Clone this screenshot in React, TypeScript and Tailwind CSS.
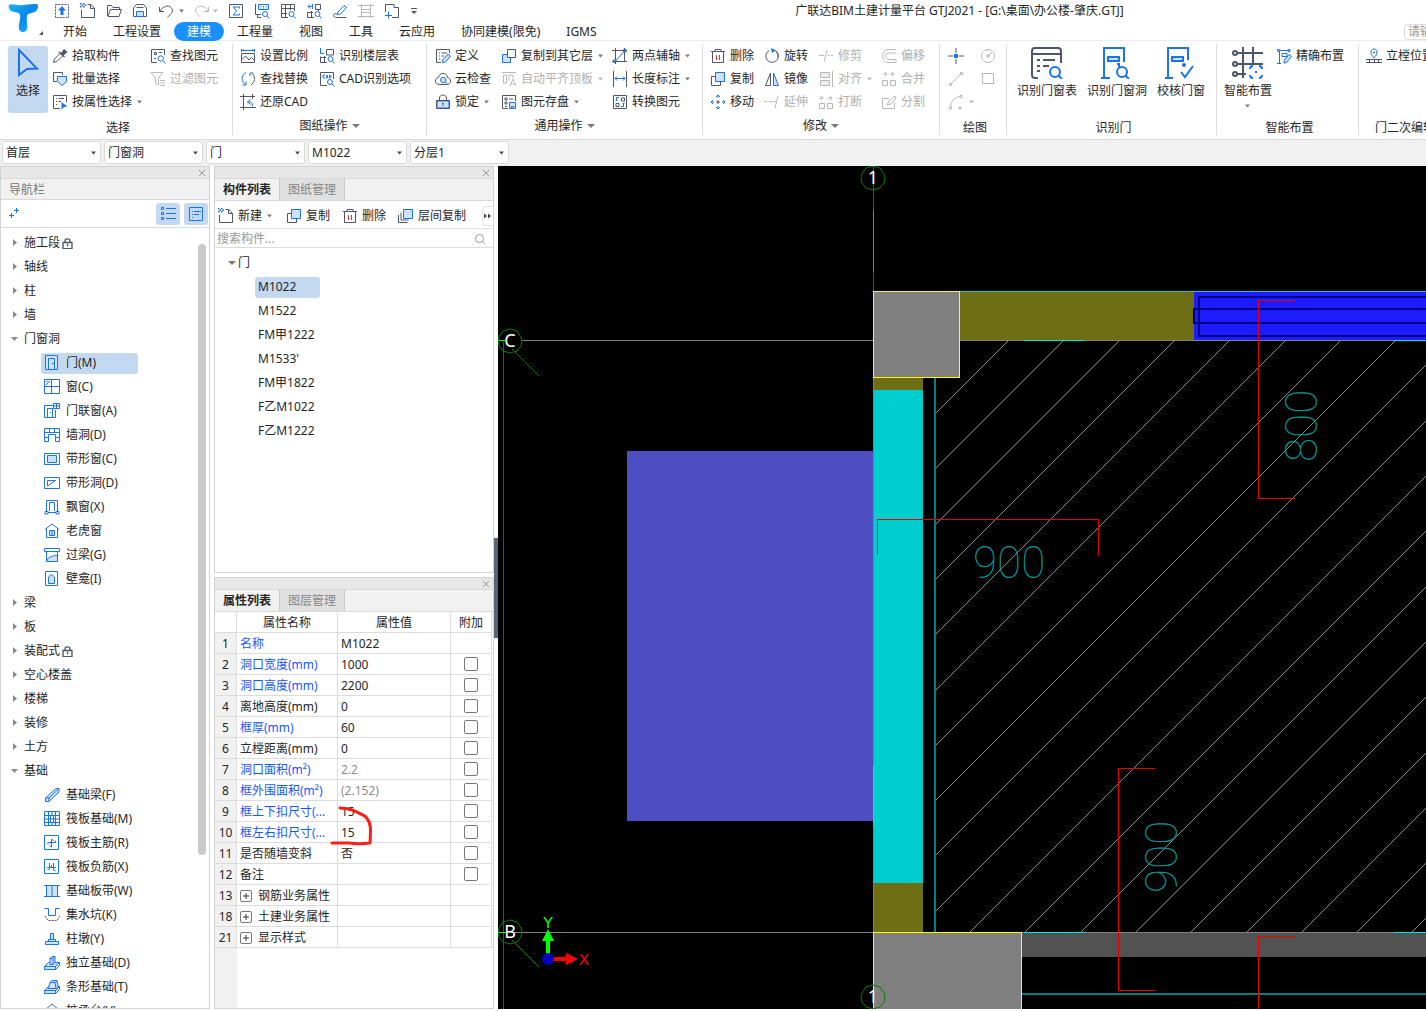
import { Fragment, useState } from 'react';
import clsx from 'clsx';

type Shape = [string, string];

const STYLES: Record<string, string> = {
    k: 'fill-none stroke-[#4f566b]',
    kd: 'fill-none stroke-[#4f566b] [stroke-dasharray:2_1]',
    K: 'fill-[#4f566b] stroke-none',
    b: 'fill-none stroke-[#1a73e8]',
    B: 'fill-[#1a73e8] stroke-none',
    f: 'fill-[#cfe2fc] stroke-[#1a73e8]',
    w: 'fill-white stroke-[#4f566b]',
    g: 'fill-none stroke-[#b8b8b8]',
    gf: 'fill-[#ececec] stroke-[#b8b8b8]',
    r: 'fill-none stroke-[#d92b2b]',
};

const ICONS: Record<string, Shape[]> = {
    // quick access bar
    upload: [['kd', 'M1.5 1.5h13v13h-13z'], ['B', 'M8 3l4 4.5H9.5V12h-3V7.5H4z']],
    newDoc: [['k', 'M7.5 1.5H11l3.500 4v9h-13V7M10.500 1.500v4h4'], ['B', 'M0 0h1.5v1.5H0zM3 0h1.5v1.5H3zM1.5 1.5H3V3H1.5zM4.5 1.5H6V3H4.5zM0 3h1.5v1.5H0zM3 3h1.5v1.5H3z']],
    open: [['k', 'M1.5 13V2.5h4l1.5 2h6.5v2M2 13.5L4.5 6.5h11l-2.500 7z']],
    save: [['k', 'M1.5 13.5V5l3-3.5h7l3 3.500v8.500zM4.500 4.5h7'], ['f', 'M4.500 13.500v-5h7v5z']],
    undo: [['k', 'M1.500 4v4.500H6M2 8c3-4.500 8-6.500 11-3.500s1 6.500-3.500 9.500']],
    redo: [['g', 'M14.500 4v4.500H10M14 8C11 3.500 6 1.500 3 4.500s-1 6.500 3.500 9.500']],
    sigma: [['k', 'M1.5 1.5h13v13h-13z'], ['b', 'M11.500 5.500v-1.500H5L8.500 8 5 12h6.500v-1.500']],
    sheetFind: [['k', 'M1.500 1v10.500H7M3.500 11.500v3H7'], ['b', 'M4.500 1.500h10v5h-10zM6.500 3.500h1M9 3.500h1M11.500 3.500h1M6.500 5h1M9 5h1M11.500 5h1M13.500 11a2.500 2.500 0 1 1-5 0a2.500 2.500 0 1 1 5 0M13 13l2.500 2.500']],
    gridFind: [['k', 'M1.500 1.500h13V8M1.500 1.500v13H8M1.500 5.500h13M1.500 10.500H7M5.500 1.500v13M10.500 1.500V7'], ['b', 'M14 11a2.500 2.500 0 1 1-5 0a2.500 2.500 0 1 1 5 0M13.500 13l2 2.500']],
    planFind: [['k', 'M9.500 1.500h5v5h-5zM1.500 9.500v5H8M1 9.500h6M5.500 8v6M12.500 6v2'], ['b', 'M2 3.500h5M4 1.500l-2 2 2 2M6.500 1v5M14 11a2.500 2.500 0 1 1-5 0a2.500 2.500 0 1 1 5 0M13.500 13l2 2.500']],
    brush: [['b', 'M6 9l6-6.500 2.500 2L8.500 11l-3.500 1z'], ['k', 'M4.500 10.500c-4 0-4 4 0 4h10']],
    ladder: [['g', 'M3.500 1v14M12.500 1v14M0 2.500h16M3 6.500h10M3 9.500h10M0 13.500h16']],
    crop: [['k', 'M1.500 9V1.500h8.500v3M10 4.500h4.500v10H8'], ['b', 'M4.500 8.500v7M1 12.500h7']],
    // ribbon
    picker: [['K', 'M9 5l3-4 3.500 3-4 3.500zM7.500 3.500l5.500 5-1 1-5.500-5z'], ['k', 'M8 5.500L2.500 11l-1 3.500 3.500-1L10.500 8']],
    batch: [['k', 'M5 10.500H1.500v-9h9V4'], ['f', 'M5.500 5.500h9v5l-4.500 4-4.500-4z']],
    attrSel: [['k', 'M8 14.500H1.500v-13h13V8M4 4.500h1M6.500 4.500H12M4 7.500h1M6.500 7.500H9M4 10.500h1'], ['B', 'M9.500 8l6 4.500-3.500.5-2.500 2.500z']],
    findEl: [['k', 'M7 14.500H1.500v-13h13V7M4.500 4.500h2v2h-2zM4 10.500h2M9 4.500h3'], ['b', 'M13.500 10.500a2.700 2.700 0 1 1-5.400 0a2.700 2.700 0 1 1 5.400 0M13 12.500l2.500 3']],
    filter: [['g', 'M1 1.500h12L8.500 7v7l-3-2V7zM10 9.500h5M10 12h5M10 14.500h5']],
    scale: [['b', 'M1.500 2.500h13M1.500 1v3M14.500 1v3M4 1.500l-2 1M12 1.500l2 1'], ['k', 'M1.500 5.500h13v9h-13zM1.500 12l4-4 3.500 4 2.500-2.500 3 3']],
    replace: [['k', 'M12 2.500C16 6 15 11 11 14'], ['b', 'M2.500 14H6v-3.500M13.500 2H10v3M6 1.500C1 4 1 11 5.500 13.500']],
    restore: [['k', 'M3.500 0v16M0 2.500h15M12.500 0v5M0 13.500h16'], ['b', 'M12.500 12.500c0-4-1-5-5-4.500M10.500 5.500L7.500 8l3 2.500']],
    floorTable: [['b', 'M1.500 0v5.500H5'], ['k', 'M7.500 1.500h7V7h-7zM1.500 8.500v6H8M1 9.500h6M5.500 8v6'], ['b', 'M14 11a2.500 2.500 0 1 1-5 0a2.500 2.500 0 1 1 5 0M13.500 13l2 2.500']],
    cadOpt: [['k', 'M8 14.500H1.500v-13h13V8'], ['b', 'M6 4H4v3h2M7 7.500L8 4l1 3.500M10.500 4v3c2 0 2-3 0-3M13.500 11a2.500 2.500 0 1 1-5 0a2.500 2.500 0 1 1 5 0M13 13l2.500 2.500']],
    define: [['k', 'M6 14.500H1.500v-13h13V5M4 5h1M6.500 5H12M4 8h1M6.500 8H9M4 11h1'], ['f', 'M7.500 14.500l.5-3L13 6l2.500 2-5 6z']],
    cloud: [['k', 'M4 13.500C-1 13-.5 7 3.500 6.500 4 1 12 1 12.500 6.500c4 .5 4 6.500 0 7z'], ['f', 'M11 9a2.700 2.700 0 1 1-5.400 0a2.700 2.700 0 1 1 5.400 0M10.500 11l2 2']],
    lock: [['k', 'M4.500 6V4c0-4 7-4 7 0v2'], ['f', 'M2 7h12v7H2z'], ['k', 'M1.500 6.500h13v8h-13z'], ['b', 'M8 9v3M7 9.500h2']],
    copyTo: [['f', 'M1.500 6.500h8v8h-8z'], ['w', 'M6.500 1.500h8v8h-8z']],
    alignTop: [['g', 'M1 1.500h14M2.500 4h3v8h-3zM8 4h4v3M8 4v6M9 15l3-7 3 7M10 13h4']],
    store: [['k', 'M7 14.500H1.500v-13h13V7M4 4h2v2H4zM4 8h2v2H4zM8 5h4M4 12.500h2'], ['f', 'M8.500 8.500h6v6h-6zM10.500 12.500h2v2h-2z']],
    twoPoint: [['k', 'M3.500 0v16M0 2.500h15M12.500 0v14M0 13.500h15'], ['b', 'M3 13.500L13 2.500M11.500 1.500h2.500V4h-2.500zM1.500 12H4v2.500H1.500z']],
    dim: [['k', 'M1.500 0v16M14.500 0v16'], ['b', 'M3 7.500h10M5 5.500l-2 2 2 2M11 5.500l2 2-2 2']],
    convert: [['k', 'M1.500 1.500h13v13h-13zM9.500 4h3v3h-3zM4 9.500h3v3H4z'], ['b', 'M7 3.500H4.500V7M3.500 6l1 1 1-1M9 12.500h2.500V9M10.500 10l1-1 1 1']],
    trash: [['k', 'M1 3.500h14M5 3.500v-2h6v2M2.500 4v10.500h11V4'], ['r', 'M6.500 7v5M9.500 7v5']],
    copy: [['k', 'M5 5.500H1.500v9h9V11'], ['f', 'M5.500 1.500h9v9h-9z']],
    copyLayers: [['k', 'M.500 7v7.500h9M3 4.500v7.500h7.500'], ['f', 'M5.500 1.500h9v9h-9z']],
    move: [['b', 'M8 1v3M8 12v3M1 8h3M12 8h3M6 3l2-2 2 2M6 13l2 2 2-2M3 6L1 8l2 2M13 6l2 2-2 2'], ['k', 'M6 8h4M8 6v4']],
    rotate: [['k', 'M10 2A6.300 6.300 0 1 1 5 2.500M12 3.500a6 6 0 0 1 2 6'], ['B', 'M7 0l4.500 2.300L8 5z']],
    mirror: [['k', 'M6.500 2v12.500h-5z'], ['f', 'M9.500 2v12.500h5z']],
    trim: [['g', 'M1 7.500h5M9 2L6 14M9.500 7.500h2M13 7.500h2']],
    extend: [['g', 'M0 7.500h3M5 7.500h3M14 2l-3 12M9 7.500h3']],
    align: [['gf', 'M2.500 1.500h9v5h-9zM2.500 9.500h9v5h-9z'], ['g', 'M14.500 0v16']],
    breakUp: [['g', 'M1.500 9.500h5v5h-5zM9.500 9.500h5v5h-5zM2 4h4M4 2L2 4l2 2M14 4h-4M12 2l2 2-2 2']],
    offset: [['g', 'M15 1.500H7c-7 0-7 13 0 13h8v-3H7c-3 0-3-6.500 0-6.500h8']],
    merge: [['g', 'M1.500 9.500h5v5h-5zM9.500 9.500h5v5h-5zM2 3h4M4 1l2 2-2 2M14 3h-4M12 1l-2 2 2 2']],
    split: [['g', 'M8 4.500H1.500v10h12V9M6 11l2-4 6-5 1 2-5 6z']],
    point: [['k', 'M8 0v5M8 11v5M0 8h5M11 8h5'], ['B', 'M6 6h4v4H6z']],
    line: [['g', 'M3 13L13 3M1.500 12.500h2v2h-2zM12.500 1.500h2v2h-2z']],
    arc: [['g', 'M2.500 13C3 7 7 3 12 2.500M1.500 13h2v2h-2zM12 1.500h2v2h-2zM11 13h2v2h-2z']],
    circle: [['g', 'M14.500 8a6.500 6.500 0 1 1-13 0a6.500 6.500 0 1 1 13 0M8 8l4-4M7 7h2v2H7z']],
    rect: [['g', 'M2.500 2.500h11v10h-11zM1.500 2.500h2M12.500 12.500h2']],
    precise: [['b', 'M3.500 3v12M1 15.500h4M3.500 2.500h9M1.500 1.500h2v2h-2zM12 1.500h2v2h-2zM6 5.500h5v3H6z'], ['f', 'M8 15l.5-3L13 6.500l2.500 2-5 6z']],
    place: [['b', 'M8 10C4 6 4 1 8 1s4 5 0 9zM7.500 4h1v1h-1z'], ['k', 'M0 11.500h16M0 14.500h16M3.500 11v3M8.500 11v3M12.500 11v3']],
    // navigation tree
    listView: [['b', 'M1.500 1.500h2v2h-2zM1.500 6.500h2v2h-2zM1.500 11.500h2v2h-2zM6 2.500h10M6 7.500h10M6 12.500h10']],
    cardView: [['b', 'M1.500 1.500h13v13h-13zM4 5.500h1M6 5.500h7M4 8.500h1M6 8.500h5M4 11.500h1']],
    addItem: [['b', 'M11.500 2v5M9 4.500h5M6.500 7v5M4 9.500h5']],
    door: [['f', 'M1.500 .5h12v14h-12z'], ['b', 'M4.500 14V3.500h6V14M8 8.500h2']],
    window: [['b', 'M.5 .500h15v14H.5zM7.500 .500v14M.5 7.500h15M2 6l4-4M2 3.500l2-2']],
    doorWindow: [['b', 'M9 2.500H.500v12h11V7M3.500 14V5.500h5V14M6 9.500h1M9.500 .5h6v5h-6zM12.500 .5v5M9.500 3h6']],
    wallHole: [['b', 'M.5 1.500h15v13H11.500v-7H4.500v7H.5zM.5 5.500h15M5.500 1.500v4M10.500 1.500v4M.5 10.500H4M12 10.500h3']],
    stripWin: [['b', 'M.5 2.500h15v11H.5z'], ['f', 'M3.500 4.500h9v7h-9z']],
    stripHole: [['b', 'M.5 2.500h15v11H.5zM3.500 11V5.500h8z']],
    bayWin: [['b', 'M2.500 12V1.500h11V12M5.500 12V3.500h5V12M1 12.500h3v2.500H1zM12 12.500h3v2.500h-3zM4 13.500h8']],
    dormer: [['b', 'M1 6.500L8 1l7 5.500M2.500 6v8.500h11V6'], ['f', 'M5.500 7.500h5v5h-5zM8 7.500v5']],
    lintel: [['b', 'M.5 1.500h15v3H.5z'], ['f', 'M2.500 14.500c1-4 5-6 11-6v6z'], ['b', 'M2.500 4.500v10M13.500 4.500v10']],
    niche: [['b', 'M1.500 .500h12v14h-12z'], ['f', 'M4.500 12.500V6l3-2.500 3 2.500v6.500z']],
    beam: [['f', 'M1.500 11L12 1.500h3V5L5 14.500H1.500zM1.500 11H5v3.500M5 11l10-9.500']],
    raft: [['b', 'M.5 .500h15v14H.5zM.5 4.500h15M.5 11.500h15M4.500 .500v14M11.500 .500v14M6.500 4.500h3v7h-3zM.500 8h15M8 .500v4M8 11.500v3']],
    raftMain: [['b', 'M.500 .500h14v14H.500zM7.500 4v8M4 7.500h8M7.500 4l2 2M4 9.500c-1-2 0-2 1-2M7.500 12l-2-1M12 7.500l-1-2']],
    raftNeg: [['b', 'M.500 .500h14v14H.500zM3 8.500h9M5.500 4v6l-2 1M9.500 4v7l2 1M7.500 6v3']],
    strip: [['f', 'M2.500 2.500h11v11h-11z'], ['b', 'M0 2.500h16M0 13.500h16M8 3v11']],
    pit: [['b', 'M.5 1.500h4v7h7v-7h4'], ['kd', 'M1 9l3 4.500h9l3-4.500']],
    pier: [['f', 'M1.500 10.500h13v3h-13zM4.500 8.500h7v2h-7zM6.500 2.500h3v6h-3z']],
    isolated: [['f', 'M.500 11.500h11v3H.500zM.500 11.500l4-4h11l-4 4M15.500 7.500v3l-4 4'], ['f', 'M6 9.500V3.500l2-2h3v6l-2 2z'], ['b', 'M6 3.500h3v6M9 3.500l2-2']],
    stripBase: [['f', 'M.500 11.500h11v3H.500zM.500 11.500l4-4h11l-4 4M15.500 7.500v3l-4 4'], ['f', 'M4 9.500l2-6 2-2h5l1 6-2 2z'], ['b', 'M6 3.500h5l2-2M11 3.500l1 6']],
    pile: [['b', 'M1 7l7-6 7 6v5H1z']],
    smallLock: [['k', 'M4.500 6V3.500c0-3 7-3 7 0V6M1.500 6.500h13v9h-13zM8 9v3M7 9.500h2']],
};

function Icon({ name, className = 'size-4' }: { name: string; className?: string }) {
    return (
        <svg viewBox="0 0 16 16" className={clsx('shrink-0', className)} aria-hidden="true">
            {ICONS[name].map(([s, d], i) => (
                <path key={i} d={d} className={STYLES[s]} />
            ))}
        </svg>
    );
}

function Caret({ className = 'text-[#7a7a7a]', wide }: { className?: string; wide?: boolean }) {
    return (
        <svg viewBox="0 0 8 4" className={clsx('h-1 w-2 shrink-0', className)} aria-hidden="true">
            <path d={wide ? 'M0 0h8L4 4z' : 'M1 .500h5L3.500 3.500z'} fill="currentColor" />
        </svg>
    );
}

function Tool({ icon, text, caret, off }: { icon: string; text?: string; caret?: boolean; off?: boolean }) {
    return (
        <button
            type="button"
            disabled={off}
            aria-label={text ?? icon}
            className={clsx('flex h-[23px] items-center gap-1 whitespace-nowrap', off ? 'text-[#b0b0b0]' : 'text-[#262626]')}
        >
            <Icon name={icon} />
            {text}
            {caret && <Caret className={off ? 'text-[#b8b8b8]' : 'text-[#7a7a7a]'} />}
        </button>
    );
}

function Group({ label, caret, className, children }: { label: string; caret?: boolean; className: string; children: React.ReactNode }) {
    return (
        <section className={clsx('flex shrink-0 flex-col border-r border-[#dcdcdc]', className)}>
            <div className="flex h-[72px] shrink-0 items-start">{children}</div>
            <div className={clsx('flex shrink-0 items-center justify-center gap-1 whitespace-nowrap', caret ? 'h-5' : 'h-6 pl-1')}>
                {label}
                {caret && <Caret wide />}
            </div>
        </section>
    );
}

function BigTool({ text, caret, className, children }: { text: string; caret?: boolean; className: string; children: React.ReactNode }) {
    return (
        <button type="button" className={clsx('flex flex-col items-center whitespace-nowrap', className)}>
            <svg viewBox="0 0 32 32" className="mt-[3px] size-8 fill-none stroke-2" aria-hidden="true">{children}</svg>
            <span className="mt-[3px] leading-[18px]">{text}</span>
            {caret && <span className="mt-1 flex"><Caret /></span>}
        </button>
    );
}

const TABS = ['开始', '工程设置', '建模', '工程量', '视图', '工具', '云应用', '协同建模(限免)', 'IGMS'];

function Header() {
    const [tab, setTab] = useState('建模');
    return (
        <header className="flex h-[41px] shrink-0 border-b border-[#ececec]">
            <div className="w-[50px] shrink-0">
                <svg viewBox="0 0 50 41" className="h-[41px] w-[50px]" aria-label="GTJ">
                    <defs>
                        <linearGradient id="logo" x1="0" y1="0" x2="1" y2="1">
                            <stop offset="0" stopColor="#1ab4f5" />
                            <stop offset="0.5" stopColor="#0a86ee" />
                            <stop offset="1" stopColor="#19c5f8" />
                        </linearGradient>
                    </defs>
                    <path d="M9 5c3-2 8 1 14 0 6-1 10-1 14-1 2 2 1 5-1 7-3 3-8 1-9 5-1 4 1 9 0 13-1 4-7 4-8 0-1-5 2-9 1-14-1-4-8-2-10-5-1-2-2-4-1-5z" fill="url(#logo)" />
                    <path d="M43 31v4h-4z" fill="#555" />
                </svg>
            </div>
            <div className="flex min-w-0 flex-1 flex-col">
                <div className="flex h-[22px] shrink-0 items-center">
                    <div className="flex items-center gap-[10px] pl-1">
                        {['upload', 'newDoc', 'open', 'save'].map((n) => (
                            <button type="button" key={n} aria-label={n}><Icon name={n} /></button>
                        ))}
                        <button type="button" aria-label="undo" className="flex items-center gap-1"><Icon name="undo" /><Caret /></button>
                        <button type="button" aria-label="redo" className="-ml-[2px] flex items-center gap-[2px]"><Icon name="redo" /><Caret className="text-[#b8b8b8]" /></button>
                        <div className="-ml-[2px] flex items-center gap-[10px]">
                            {['sigma', 'sheetFind', 'gridFind', 'planFind', 'brush', 'ladder', 'crop'].map((n) => (
                                <button type="button" key={n} aria-label={n}><Icon name={n} /></button>
                            ))}
                        </div>
                        <button type="button" aria-label="more">
                            <svg viewBox="0 0 8 8" className="size-2" aria-hidden="true"><path d="M1 1h6v1H1zM1 4h6L4 7z" fill="#555" /></svg>
                        </button>
                    </div>
                    <h1 className="flex-1 truncate pl-[75px] text-center">广联达BIM土建计量平台 GTJ2021 - [G:\桌面\办公楼-肇庆.GTJ]</h1>
                </div>
                <nav className="flex h-[19px] shrink-0 items-center">
                    {TABS.map((t) => (
                        <button
                            type="button"
                            key={t}
                            onClick={() => setTab(t)}
                            className={clsx('h-[19px] rounded-full px-[13px] leading-[19px] whitespace-nowrap', t === tab && 'bg-[#1890ff] text-white')}
                        >
                            {t}
                        </button>
                    ))}
                    <input aria-label="搜索" placeholder="请输入" className="ml-auto h-4 w-[22px] rounded-l border border-r-0 border-[#dcdcdc] pl-[3px] placeholder:text-[#999]" />
                </nav>
            </div>
        </header>
    );
}

function Ribbon() {
    return (
        <div className="flex h-[99px] shrink-0 overflow-hidden border-b border-[#d9d9d9] pt-[3px] pb-1">
            <Group label="选择" className="w-[233px]">
                <button type="button" className="mt-[2px] ml-2 flex h-[67px] w-10 shrink-0 flex-col items-center rounded-[3px] bg-[#c3d9f2]">
                    <svg viewBox="0 0 40 37" className="h-[37px] w-10" aria-hidden="true">
                        <path d="M11 4l18 18.500-10 .500-8 6z" className="fill-none stroke-[#1a73e8] stroke-2" />
                    </svg>
                    选择
                </button>
                <div className="grid grid-cols-[98px_82px] pl-1">
                    <Tool icon="picker" text="拾取构件" />
                    <Tool icon="findEl" text="查找图元" />
                    <Tool icon="batch" text="批量选择" />
                    <Tool icon="filter" text="过滤图元" off />
                    <Tool icon="attrSel" text="按属性选择" caret />
                </div>
            </Group>
            <Group label="图纸操作" caret className="w-[194px]">
                <div className="grid grid-cols-[79px_100px] pl-[7px]">
                    <Tool icon="scale" text="设置比例" />
                    <Tool icon="floorTable" text="识别楼层表" />
                    <Tool icon="replace" text="查找替换" />
                    <Tool icon="cadOpt" text="CAD识别选项" />
                    <Tool icon="restore" text="还原CAD" />
                </div>
            </Group>
            <Group label="通用操作" caret className="w-[276px]">
                <div className="grid grid-cols-[66px_111px_84px] pl-2">
                    <Tool icon="define" text="定义" />
                    <Tool icon="copyTo" text="复制到其它层" caret />
                    <Tool icon="twoPoint" text="两点辅轴" caret />
                    <Tool icon="cloud" text="云检查" />
                    <Tool icon="alignTop" text="自动平齐顶板" caret off />
                    <Tool icon="dim" text="长度标注" caret />
                    <Tool icon="lock" text="锁定" caret />
                    <Tool icon="store" text="图元存盘" caret />
                    <Tool icon="convert" text="转换图元" />
                </div>
            </Group>
            <Group label="修改" caret className="w-[237px]">
                <div className="grid grid-cols-[54px_54px_63px_46px] pl-[7px]">
                    <Tool icon="trash" text="删除" />
                    <Tool icon="rotate" text="旋转" />
                    <Tool icon="trim" text="修剪" off />
                    <Tool icon="offset" text="偏移" off />
                    <Tool icon="copy" text="复制" />
                    <Tool icon="mirror" text="镜像" />
                    <Tool icon="align" text="对齐" caret off />
                    <Tool icon="merge" text="合并" off />
                    <Tool icon="move" text="移动" />
                    <Tool icon="extend" text="延伸" off />
                    <Tool icon="breakUp" text="打断" off />
                    <Tool icon="split" text="分割" off />
                </div>
            </Group>
            <Group label="绘图" className="w-[67px]">
                <div className="grid grid-cols-[32px_20px] pl-2">
                    <Tool icon="point" />
                    <Tool icon="circle" off />
                    <Tool icon="line" off />
                    <Tool icon="rect" off />
                    <Tool icon="arc" caret off />
                </div>
            </Group>
            <Group label="识别门" className="w-[210px]">
                <BigTool text="识别门窗表" className="ml-[5px] w-[70px]">
                    <path d="M7 31H4q-3 0-3-3V4q0-3 3-3h23q3 0 3 3v12M1 7h29M6 13h3M12 13h12M6 19h3M12 19h6M6 24h3" className="stroke-[#4f566b]" />
                    <path d="M29 25a5 5 0 1 1-10 0a5 5 0 1 1 10 0M28 29l3 3" className="stroke-[#1a73e8]" />
                </BigTool>
                <BigTool text="识别门窗洞" className="w-[70px]">
                    <path d="M0 31h9M3 30V1h20v14M16 17h2v3" className="stroke-[#1a73e8]" />
                    <path d="M7 10h11v4H7z" className="fill-[#cfe2fc] stroke-[#1a73e8]" />
                    <path d="M26 25a5 5 0 1 1-10 0a5 5 0 1 1 10 0M25 29l3 3" className="stroke-[#1a73e8]" />
                </BigTool>
                <BigTool text="校核门窗" className="w-[58px]">
                    <path d="M0 31h8M3 30V1h20v12M16 25l4 5 8-11" className="stroke-[#1a73e8]" />
                    <path d="M7 10h11v4H7z" className="fill-[#cfe2fc] stroke-[#1a73e8]" />
                    <circle cx="19" cy="18" r="1" className="stroke-[#1a73e8]" />
                </BigTool>
            </Group>
            <Group label="智能布置" className="w-[142px]">
                <BigTool text="智能布置" caret className="ml-[5px] w-[52px]">
                    <path d="M11 0v31M21 0v16M5 6h26M5 17h26M5 27h9" className="stroke-[#4f566b]" />
                    <path d="M1 6a2 2 0 1 1 4 0a2 2 0 1 1-4 0M1 17a2 2 0 1 1 4 0a2 2 0 1 1-4 0M1 27a2 2 0 1 1 4 0a2 2 0 1 1-4 0" className="stroke-[#4f566b]" />
                    <path d="M21 19q-3 0-3 3M27 19q3 0 3 3M21 31q-3 0-3-3M27 31q3 0 3-3M23 25h2" className="stroke-[#1a73e8]" />
                </BigTool>
                <div className="pl-[2px]">
                    <Tool icon="precise" text="精确布置" />
                </div>
            </Group>
            <Group label="门二次编辑" className="w-[89px]">
                <div className="pl-[7px]">
                    <Tool icon="place" text="立樘位置" />
                </div>
            </Group>
        </div>
    );
}

const COMBOS = [
    { label: '楼层', value: '首层' },
    { label: '构件类别', value: '门窗洞' },
    { label: '构件类型', value: '门' },
    { label: '构件', value: 'M1022' },
    { label: '分层', value: '分层1' },
];

function ComboBar() {
    return (
        <div className="flex h-[26px] shrink-0 items-start gap-[3px] bg-[#f1f1f1] pt-px pl-[2px]">
            {COMBOS.map((c) => (
                <div key={c.label} className="relative">
                    <select aria-label={c.label} className="h-[23px] w-[99px] appearance-none rounded-[3px] border border-[#dadada] bg-white pl-[3px]">
                        <option>{c.value}</option>
                    </select>
                    <span className="pointer-events-none absolute top-[10px] right-[3px] flex"><Caret className="text-[#4a4a4a]" /></span>
                </div>
            ))}
        </div>
    );
}

type Node = { text: string; locked?: boolean; items?: [string, string][] };

const TREE: Node[] = [
    { text: '施工段', locked: true },
    { text: '轴线' },
    { text: '柱' },
    { text: '墙' },
    {
        text: '门窗洞',
        items: [
            ['door', '门(M)'],
            ['window', '窗(C)'],
            ['doorWindow', '门联窗(A)'],
            ['wallHole', '墙洞(D)'],
            ['stripWin', '带形窗(C)'],
            ['stripHole', '带形洞(D)'],
            ['bayWin', '飘窗(X)'],
            ['dormer', '老虎窗'],
            ['lintel', '过梁(G)'],
            ['niche', '壁龛(I)'],
        ],
    },
    { text: '梁' },
    { text: '板' },
    { text: '装配式', locked: true },
    { text: '空心楼盖' },
    { text: '楼梯' },
    { text: '装修' },
    { text: '土方' },
    {
        text: '基础',
        items: [
            ['beam', '基础梁(F)'],
            ['raft', '筏板基础(M)'],
            ['raftMain', '筏板主筋(R)'],
            ['raftNeg', '筏板负筋(X)'],
            ['strip', '基础板带(W)'],
            ['pit', '集水坑(K)'],
            ['pier', '柱墩(Y)'],
            ['isolated', '独立基础(D)'],
            ['stripBase', '条形基础(T)'],
            ['pile', '桩承台(V)'],
        ],
    },
];

function PanelBar() {
    return (
        <div className="flex h-3 shrink-0 items-center justify-end border-b border-[#d9d9d9] bg-[#e7e7e7] pr-[3px]">
            <button type="button" aria-label="关闭">
                <svg viewBox="0 0 8 8" className="size-2 stroke-[#999]"><path d="M1 1l6 6M7 1L1 7" /></svg>
            </button>
        </div>
    );
}

function NavPanel() {
    const [active, setActive] = useState('门(M)');
    return (
        <aside className="flex w-[210px] shrink-0 flex-col border border-[#d3d3d3] bg-white">
            <PanelBar />
            <h2 className="h-[21px] shrink-0 border-b border-[#d9d9d9] bg-[#f1f1f1] pl-2 leading-[21px] text-[#777]">导航栏</h2>
            <div className="flex h-[28px] shrink-0 items-center gap-1 border-b border-[#d9d9d9] pr-px pl-1">
                <button type="button" aria-label="新增" className="mr-auto"><Icon name="addItem" /></button>
                <button type="button" aria-label="列表" className="flex h-[22px] w-6 items-center justify-center rounded-[3px] bg-[#c3d9f2]"><Icon name="listView" /></button>
                <button type="button" aria-label="卡片" className="flex h-[22px] w-6 items-center justify-center rounded-[3px] bg-[#c3d9f2]"><Icon name="cardView" /></button>
            </div>
            <div className="flex min-h-0 flex-1">
                <ul className="min-w-0 flex-1 overflow-hidden pt-[3px]">
                    {TREE.map((n) => (
                        <Fragment key={n.text}>
                            <li className="flex h-6 items-center">
                                <button type="button" className="flex items-center">
                                    <svg viewBox="0 0 8 8" className="mr-[5px] ml-[10px] size-2 fill-[#8a8a8a]" aria-hidden="true">
                                        <path d={n.items ? 'M0 2h7L3.500 6z' : 'M2 0l4 3.500L2 7z'} />
                                    </svg>
                                    {n.text}
                                    {n.locked && <Icon name="smallLock" className="ml-[2px] size-[11px] stroke-2" />}
                                </button>
                            </li>
                            {n.items?.map(([icon, text]) => (
                                <li key={text} className="flex h-6 items-center pl-10">
                                    <button
                                        type="button"
                                        onClick={() => setActive(text)}
                                        className={clsx('flex h-[21px] w-[97px] items-center gap-[6px] rounded-[3px] pl-[3px] whitespace-nowrap', active === text && 'bg-[#c3d9f2]')}
                                    >
                                        <Icon name={icon} />
                                        {text}
                                    </button>
                                </li>
                            ))}
                        </Fragment>
                    ))}
                </ul>
                <div className="w-[11px] pt-4">
                    <div className="h-[80%] w-2 rounded-full bg-[#c9c9c9]" />
                </div>
            </div>
        </aside>
    );
}

function PanelTabs({ tabs }: { tabs: string[] }) {
    return (
        <div className="flex h-[22px] shrink-0 border-b border-[#d9d9d9] bg-[#f1f1f1]">
            {tabs.map((t, i) => (
                <button
                    type="button"
                    key={t}
                    className={clsx('w-[65px] border-r border-[#c9c9c9] leading-[21px]', i === 0 ? 'font-bold' : 'bg-[#e0e0e0] text-[#888]')}
                >
                    {t}
                </button>
            ))}
        </div>
    );
}

const COMPONENTS = ['M1022', 'M1522', 'FM甲1222', "M1533'", 'FM甲1822', 'F乙M1022', 'F乙M1222'];

function ComponentPanel() {
    const [active, setActive] = useState('M1022');
    return (
        <section className="flex min-h-0 flex-1 flex-col border border-[#d3d3d3] bg-white">
            <PanelBar />
            <PanelTabs tabs={['构件列表', '图纸管理']} />
            <div className="flex h-[28px] shrink-0 items-center gap-3 border-b border-[#e0e0e0] pt-[2px] pl-[3px]">
                <Tool icon="newDoc" text="新建" caret />
                <Tool icon="copy" text="复制" />
                <Tool icon="trash" text="删除" />
                <Tool icon="copyLayers" text="层间复制" />
                <button type="button" aria-label="更多" className="ml-auto h-5 w-[11px] rounded-l border border-r-0 border-[#e2e2e2]">
                    <svg viewBox="0 0 10 6" className="h-[6px] w-[10px] fill-[#444]"><path d="M1 .500l3 2.500-3 2.500zM5 .500l3 2.500-3 2.500z" /></svg>
                </button>
            </div>
            <div className="flex h-[19px] shrink-0 items-center border-b border-[#dcdcdc] pt-px pr-[7px] pl-[2px]">
                <input aria-label="搜索构件" placeholder="搜索构件..." className="min-w-0 flex-1 placeholder:text-[#999] focus:outline-none" />
                <svg viewBox="0 0 12 12" className="size-3 fill-none stroke-[#999]" aria-hidden="true"><path d="M9.500 5.500a4 4 0 1 1-8 0a4 4 0 1 1 8 0M8.500 8.500L11 11" /></svg>
            </div>
            <ul className="overflow-hidden pt-[3px]">
                <li className="flex h-6 items-center gap-[2px] pl-[13px]"><Caret wide />门</li>
                {COMPONENTS.map((c) => (
                    <li key={c} className="flex h-6 items-center pl-10">
                        <button
                            type="button"
                            onClick={() => setActive(c)}
                            className={clsx('h-[21px] min-w-[65px] rounded-[3px] px-[3px] text-left whitespace-nowrap', active === c && 'bg-[#c3d9f2]')}
                        >
                            {c}
                        </button>
                    </li>
                ))}
            </ul>
        </section>
    );
}

type Prop = { no: number; name: string; value?: string; blue?: boolean; gray?: boolean; check?: boolean; group?: boolean };

const PROPS: Prop[] = [
    { no: 1, name: '名称', value: 'M1022', blue: true },
    { no: 2, name: '洞口宽度(mm)', value: '1000', blue: true, check: true },
    { no: 3, name: '洞口高度(mm)', value: '2200', blue: true, check: true },
    { no: 4, name: '离地高度(mm)', value: '0', check: true },
    { no: 5, name: '框厚(mm)', value: '60', blue: true, check: true },
    { no: 6, name: '立樘距离(mm)', value: '0', check: true },
    { no: 7, name: '洞口面积(m²)', value: '2.2', blue: true, gray: true, check: true },
    { no: 8, name: '框外围面积(m²)', value: '(2.152)', blue: true, gray: true, check: true },
    { no: 9, name: '框上下扣尺寸(...', value: '15', blue: true, check: true },
    { no: 10, name: '框左右扣尺寸(...', value: '15', blue: true, check: true },
    { no: 11, name: '是否随墙变斜', value: '否', check: true },
    { no: 12, name: '备注', check: true },
    { no: 13, name: '钢筋业务属性', group: true },
    { no: 18, name: '土建业务属性', group: true },
    { no: 21, name: '显示样式', group: true },
];

function PropertyPanel() {
    return (
        <section className="relative flex h-[432px] shrink-0 flex-col border border-[#d3d3d3] bg-white">
            <PanelBar />
            <PanelTabs tabs={['属性列表', '图层管理']} />
            <div className="flex-1 bg-[linear-gradient(to_right,#f1f1f1_22px,#fff_22px)]">
                <table className="w-[277px] table-fixed border-separate border-spacing-0">
                    <colgroup>
                        <col className="w-[22px]" />
                        <col className="w-[101px]" />
                        <col className="w-[113px]" />
                        <col className="w-[41px]" />
                    </colgroup>
                    <thead>
                        <tr className="h-[21px] bg-white *:border-r *:border-b *:border-[#dcdcdc] *:p-0 *:pt-[2px] *:font-normal">
                            <th />
                            <th>属性名称</th>
                            <th>属性值</th>
                            <th>附加</th>
                        </tr>
                    </thead>
                    <tbody>
                        {PROPS.map((p) => (
                            <tr key={p.no} className="h-[21px] *:border-r *:border-b *:border-[#dcdcdc] *:p-0 *:not-last:pt-[2px]">
                                <td className="bg-[#f1f1f1] text-center">{p.no}</td>
                                <td className={clsx('overflow-hidden whitespace-nowrap', p.blue && 'text-[#1557ff]')}>
                                    <span className="flex items-center pl-[3px]">
                                        {p.group && (
                                            <button type="button" aria-label="展开" className="mr-[6px] flex size-3 items-center justify-center rounded-[2px] border border-[#777]">
                                                <svg viewBox="0 0 6 6" className="size-[6px] stroke-[#333]"><path d="M3 0v6M0 3h6" /></svg>
                                            </button>
                                        )}
                                        {p.name}
                                    </span>
                                </td>
                                <td className={clsx('whitespace-nowrap', p.gray && 'text-[#8c8c8c]')}><span className="pl-[3px]">{p.value}</span></td>
                                <td>
                                    {p.check && (
                                        <input type="checkbox" aria-label={p.name + ' 附加'} className="mx-auto block size-[14px] appearance-none rounded-[2px] border border-[#777] bg-white checked:bg-[#1a73e8]" />
                                    )}
                                </td>
                            </tr>
                        ))}
                    </tbody>
                </table>
            </div>
            {/* red pen mark over rows 9 and 10 */}
            <svg viewBox="0 0 44 42" className="pointer-events-none absolute top-[226px] left-[115px] h-[42px] w-11" aria-hidden="true">
                <path d="M10 4l10 1c7 3 12 5 16 8 5 6 5 10 4 26-8 1-15 1-21 0H2" className="fill-none stroke-[#ff1e14] stroke-[3px]" strokeLinecap="round" strokeLinejoin="round" />
            </svg>
        </section>
    );
}

const HATCH = Array.from({ length: 19 }, (_, k) => 1349 + Math.round(k * 55.3));

function Bubble({ x, y, text }: { x: number; y: number; text: string }) {
    return (
        <g>
            <path
                transform={`translate(${x} ${y})`}
                d="M0-12l7 2 4 6 1 4-1 5-4 5-7 2-7-2-4-5-1-5 1-4 4-6z"
                className="fill-none stroke-[#008000]"
            />
            <text x={x} y={y + 6} textAnchor="middle" className="fill-white text-[18px]">{text}</text>
        </g>
    );
}

function ModelView() {
    return (
        <svg viewBox="498 166 928 843" preserveAspectRatio="xMinYMin slice" className="h-full min-w-0 flex-1 bg-black" role="img" aria-label="模型">
            <defs>
                <clipPath id="room"><path d="M936 341h700v591H936z" /></clipPath>
            </defs>
            <g shapeRendering="crispEdges">
                <path d="M627 451h246v370H627z" fill="#4e4ec3" />
                <path d="M960 292h234v48H960zM874 377h49v13h-49zM874 883h49v49h-49z" fill="#6e6e14" />
                <path d="M874 390h49v493h-49z" fill="#00cdcd" />
                <path d="M1194 292h500v48h-500z" fill="#1c1cff" />
                <path d="M1700 297h-501v39h501M1700 309h-506v14h506" className="fill-none stroke-[#000080] stroke-2" />
                <path d="M1022 933h600v24h-600z" fill="#525252" />
                <path d="M522 340.500h1100M498 932.500h1100M873.500 211v61M873.500 377v556" stroke="#808080" />
                <path d="M873.500 166v45M873.500 272v19M503.500 341v668" stroke="#008000" />
                <path d="M960 291.500h700" stroke="#00d2d2" />
                <path d="M1024 340.500h61M1394 340.500h60M1024 932.500h61M1394 932.500h60M873.500 766v61" stroke="#00e5e5" />
                <path d="M935 377v555M1022 994h600" stroke="#008080" strokeWidth="2" />
            </g>
            <g clipPath="url(#room)" stroke="#8c8c8c">
                {HATCH.map((s) => (
                    <path key={s} d={`M${s - 340} 340L${s - 932} 932`} />
                ))}
            </g>
            <g shapeRendering="crispEdges">
                <path d="M873.500 291.500h86v86h-86z" fill="#808080" stroke="#ffff00" />
                <path d="M873.500 1020v-87.500h148V1020" fill="#808080" stroke="#ffff00" />
                <path d="M877.500 555v-35.500h221v36M1295 300.500h-36.500v197.500h36.500M1155 768.500h-36.500v222h36.500M1295 936.500h-36.500V1020" fill="none" stroke="#e60000" />
                <path d="M498 340.500h7M498 932.500h7" stroke="#00ff00" />
            </g>
            <path d="M512 349l27 27M512 940l27 27" stroke="#008000" />
            <g className="fill-[#009a9a] font-['Liberation_Sans_Narrow','Roboto'] text-[44px] font-thin">
                <text x="973" y="578">900</text>
                <text transform="translate(1317 462) rotate(-90)">800</text>
                <text transform="translate(1177 893) rotate(-90)">900</text>
            </g>
            <Bubble x={873} y={178} text="1" />
            <Bubble x={873} y={997} text="1" />
            <Bubble x={510} y={341} text="C" />
            <Bubble x={510} y={932} text="B" />
            <path d="M546 955v-14h-4l6-12 6 12h-4v14z" fill="#00ff00" />
            <path d="M552 957h14v-4l12 6-12 6v-4h-14z" fill="#ff0000" />
            <circle cx="548" cy="959" r="6" fill="#0000c0" />
            <g className="font-['Liberation_Mono'] text-[17px]" textAnchor="middle">
                <text x="548" y="928" fill="#00ff00">Y</text>
                <text x="584" y="965" fill="#ff0000">X</text>
            </g>
        </svg>
    );
}

export default function App() {
    return (
        <div className="flex h-screen flex-col overflow-hidden bg-white pb-[2px] font-['Noto_Sans','Noto_Sans_CJK_SC',sans-serif] text-[12px] leading-4 text-[#262626]">
            <Header />
            <Ribbon />
            <ComboBar />
            <main className="flex min-h-0 flex-1">
                <NavPanel />
                <div className="ml-1 flex w-[280px] shrink-0 flex-col gap-1">
                    <ComponentPanel />
                    <PropertyPanel />
                </div>
                <div className="flex w-1 shrink-0 items-center">
                    <button type="button" aria-label="收起" className="h-[100px] w-1 bg-[#5b6475]" />
                </div>
                <ModelView />
            </main>
        </div>
    );
}
